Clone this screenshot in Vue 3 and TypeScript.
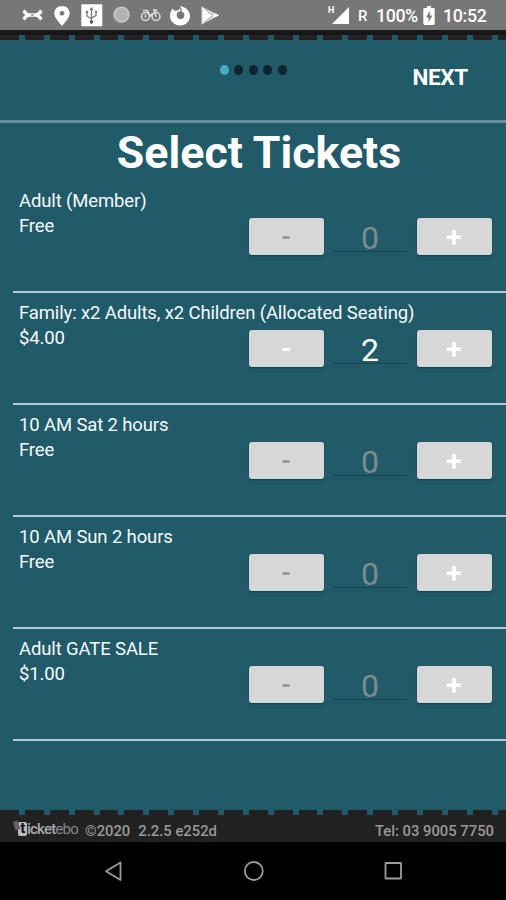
<script setup lang="ts">
import { ref } from 'vue'

interface Ticket {
  name: string
  price: string
  quantity: number
}

const tickets = ref<Ticket[]>([
  { name: 'Adult (Member)', price: 'Free', quantity: 0 },
  { name: 'Family: x2 Adults, x2 Children (Allocated Seating)', price: '$4.00', quantity: 2 },
  { name: '10 AM Sat 2 hours', price: 'Free', quantity: 0 },
  { name: '10 AM Sun 2 hours', price: 'Free', quantity: 0 },
  { name: 'Adult GATE SALE', price: '$1.00', quantity: 0 },
])
const steps = 5
const currentStep = 1

function change(ticket: Ticket, amount: number): void {
  ticket.quantity = Math.max(0, ticket.quantity + amount)
}
</script>

<template>
  <div class="screen">
    <header class="status">
      <svg class="status-icons" viewBox="0 0 230 30" aria-hidden="true">
        <path d="M25 9.300q1.500 3.500 4.500 4h6q3-.5 4.500-4l2.500 2.200q-.5 2.500-3 3.500 2.500 1 3 3.500l-2.500 2.200q-1.500-3.500-4.500-4h-6q-3 .5-4.500 4l-2.500-2.200q.5-2.500 3-3.500-2.500-1-3-3.500z" fill="#f6f6f6" />
        <path d="M31 15h3" stroke="#999" stroke-width="1.500" />
        <path d="M62 6c-4.600 0-7.700 3.200-7.700 7.400 0 5 7.700 12.300 7.700 12.300s7.700-7.300 7.700-12.300c0-4.200-3.100-7.400-7.700-7.400z" fill="#fff" />
        <circle cx="62" cy="13.300" r="2.300" fill="#777" />
        <rect x="81.300" y="4.300" width="21" height="22" rx="1" fill="#fff" />
        <g fill="none" stroke="#777" stroke-width="1.300">
          <path d="M91.500 8v14M87 12v4l4.500 3M96 12v3.500l-4.500 2.500" />
        </g>
        <path d="M89.700 10l1.800-3 1.800 3z" fill="#666" />
        <circle cx="91.500" cy="22" r="1.800" fill="#555" />
        <circle cx="87" cy="12" r="1.200" fill="#777" />
        <path d="M95 11h2v2h-2z" fill="#777" />
        <circle cx="121.300" cy="15" r="8.500" fill="#999" />
        <circle cx="121.700" cy="14.600" r="7.200" fill="#b2b2b2" stroke="#cdcdcd" stroke-width="1.200" />
        <g fill="none" stroke="#dedede" stroke-width="1.500">
          <circle cx="145.500" cy="16.500" r="4" />
          <circle cx="156" cy="16.500" r="4" />
          <path d="M145.500 14.500v3M156 17l-2-7M143 10.500h3.500q2 0 2 3l2.500 2.500 1.500-3M153 10h2.500q1.500 0 1.500 1.500" />
        </g>
        <path d="M173 8.500q0 2 2 2.300l3-.3q1.500-1 1.500-2.500 1 1 1 3.200-3.500.3-3.800 3.300c-.3 3 1.700 5 4.400 4.500 3.500-.6 4.200-4.300 2.200-6.600-.8-.8-1.700-1-1.700-1 .5-2.200-.5-4-1.800-5.500 5.500.8 10.200 4.600 10.200 9.800 0 5.700-4.200 9.700-9.800 9.700-6 0-10.200-4.300-10.200-9.700 0-3.200 1.200-5.500 3-7.200z" fill="#fff" />
        <path d="M201.500 6.500l17.500 8.700-17.500 9.300z" fill="#e4e4e4" />
        <path d="M203 8l9.500 7.300-9.500 7.500z" fill="#fff" />
        <path d="M204.500 9l8.500 6.300-8.500 7" fill="none" stroke="#8c8c8c" stroke-width=".8" />
        <path d="M215 13.200l4 2-4 2-2-2z" fill="#fff" />
      </svg>
      <div class="system">
        <span class="network">H</span>
        <svg class="signal" viewBox="0 0 17 17" aria-hidden="true"><path d="M17 0v17H0z" fill="#fff" /></svg>
        <span class="roaming">R</span>
        <span class="percent">100%</span>
        <svg class="battery" viewBox="0 0 12 20" aria-hidden="true">
          <path d="M4 0h4v2h2.500Q12 2 12 3.500v15q0 1.500-1.500 1.500h-9Q0 20 0 18.500v-15Q0 2 1.500 2H4z" fill="#fff" />
          <path d="M6.800 5L3 12h2.600v5L9.500 10H6.800z" fill="#777" />
        </svg>
        <time class="clock">10:52</time>
      </div>
    </header>

    <div class="edge top-edge"></div>

    <nav class="toolbar">
      <div class="dots">
        <span v-for="step in steps" :key="step" class="dot" :class="{ current: step === currentStep }"></span>
      </div>
      <button class="next" type="button">NEXT</button>
    </nav>

    <main>
      <h1>Select Tickets</h1>
      <ul class="tickets">
        <li v-for="ticket in tickets" :key="ticket.name" class="ticket">
          <span class="name">{{ ticket.name }}</span>
          <span class="price">{{ ticket.price }}</span>
          <div class="stepper">
            <button type="button" class="minus" :disabled="ticket.quantity === 0" @click="change(ticket, -1)">-</button>
            <output class="quantity" :class="{ filled: ticket.quantity > 0 }">{{ ticket.quantity }}</output>
            <button type="button" class="plus" @click="change(ticket, 1)">+</button>
          </div>
        </li>
      </ul>
    </main>

    <div class="edge bottom-edge"></div>
    <footer class="footer">
      <span class="logo"><i class="shade"></i><b class="mark">t</b><span class="first">icket</span><span class="last">ebo</span></span>
      <span class="copyright">©2020</span>
      <span class="version">2.2.5 e252d</span>
      <span class="phone">Tel: 03 9005 7750</span>
    </footer>
    <svg class="navigation" viewBox="0 0 506 58" aria-hidden="true">
      <g fill="none" stroke="#9b9b9b" stroke-width="1.800" stroke-linejoin="round">
        <path d="M120.500 20.500v17.500l-14.500-8.700z" />
        <circle cx="253.800" cy="29" r="9" />
        <rect x="385.500" y="21" width="15.500" height="15.500" rx=".5" />
      </g>
    </svg>
  </div>
</template>

<style>
body {
  background: #000;
}
</style>

<style scoped>
.screen {
  width: 506px;
  height: 900px;
  display: flex;
  flex-direction: column;
  overflow: hidden;
  background: #215b69;
  color: #f5fafc;
  font-family: Roboto, sans-serif;
}

.status {
  height: 30px;
  flex: none;
  display: flex;
  justify-content: space-between;
  background: #777;
  color: #fff;
}

.status-icons {
  width: 230px;
  height: 30px;
}

.system {
  display: flex;
  align-items: flex-start;
  padding-right: 18px;
  font-weight: 500;
  font-size: 17.800px;
  line-height: 32px;
}

.network {
  font-size: 9px;
  font-weight: 700;
  line-height: 21px;
  width: 4px;
}

.signal {
  width: 17px;
  height: 17px;
  margin-top: 7px;
}

.roaming {
  margin-left: 9px;
  width: 18px;
  font-size: 15px;
}

.percent {
  width: 47px;
  letter-spacing: -0.400px;
}

.battery {
  width: 12px;
  height: 19px;
  margin-top: 6px;
}

.clock {
  width: 45px;
  margin-left: 8px;
  letter-spacing: -0.300px;
}

.edge {
  flex: none;
  background: repeating-linear-gradient(90deg, #215b69 0 6px, #222 6px 24.87px) -5.900px 0 / 600px 100%;
}

.top-edge {
  height: 5px;
  border-top: 5px solid #171717;
}

.toolbar {
  height: 83px;
  flex: none;
  display: grid;
  grid-template-columns: 1fr auto 1fr;
  box-sizing: border-box;
  border-bottom: 3px solid #6b8d98;
}

.dots {
  grid-column: 2;
  display: flex;
  gap: 5.500px;
  padding-top: 25px;
}

.dot {
  width: 9px;
  height: 10px;
  border-radius: 50%;
  background: #0c242e;
}

.dot.current {
  background: #43aeca;
}

.next {
  justify-self: end;
  align-self: start;
  margin: 23px 38px 0 0;
  padding: 0;
  border: 0;
  background: none;
  color: #fff;
  font: 700 22.500px/28px Roboto, sans-serif;
  letter-spacing: -0.300px;
}

main {
  flex: 1;
}

h1 {
  margin: 0;
  height: 58px;
  color: #fff;
  font-size: 44.700px;
  font-weight: 700;
  line-height: 60px;
  text-align: center;
  padding-left: 12px;
}

.tickets {
  list-style: none;
  margin: 0 0 0 13px;
  padding: 0;
}

.ticket {
  height: 112px;
  box-sizing: border-box;
  display: grid;
  grid-template-columns: 230px 1fr;
  grid-template-rows: 25px 1fr;
  padding: 7px 15px 0 6px;
  border-bottom: 2px solid #b5cbd0;
  font-size: 18.500px;
  letter-spacing: -0.130px;
  line-height: 26px;
}

.name {
  grid-column: 1 / 3;
  white-space: nowrap;
}

.stepper {
  display: grid;
  grid-template-columns: 74px 74px 74px;
  justify-content: end;
  gap: 10px;
  padding-top: 5px;
}

.stepper button {
  width: 75px;
  height: 37px;
  margin-left: -0.500px;
  padding: 0;
  border: 0;
  border-radius: 3px;
  background: #d6d8d7;
  box-shadow: 0 1px 2px #0d3e4b;
  color: #fff;
  font: 700 28px/39px Roboto, sans-serif;
}

.stepper .minus {
  font-size: 26px;
}

.stepper button:disabled {
  color: #999c9c;
}

.quantity {
  height: 33px;
  border-bottom: 1px solid #174350;
  color: #7a8d92;
  font-size: 32px;
  line-height: 41px;
  text-align: center;
}

.quantity.filled {
  color: #fff;
}

.bottom-edge {
  height: 5px;
}

.footer {
  height: 27px;
  flex: none;
  display: flex;
  align-items: flex-start;
  padding: 0 12px 0 14px;
  background: #222;
  color: #999;
  font-size: 14.800px;
  font-weight: 500;
  line-height: 33px;
}

.logo {
  width: 71px;
  display: flex;
  align-items: center;
  height: 28px;
  font-size: 15px;
  letter-spacing: -0.800px;
}

.shade {
  width: 5px;
  height: 9px;
  margin-top: -7px;
  margin-right: -1px;
  background: #606060;
  transform: rotate(-18deg);
}

.mark {
  width: 9px;
  height: 14px;
  border-radius: 2px;
  background: #bbb;
  color: #111;
  line-height: 13px;
  text-align: center;
}

.first {
  color: #aaa;
}

.last {
  color: #858585;
  font-weight: 400;
}

.version {
  margin-left: 8px;
}

.phone {
  margin-left: auto;
}

.navigation {
  width: 506px;
  height: 58px;
  flex: none;
  background: #000;
}
</style>
